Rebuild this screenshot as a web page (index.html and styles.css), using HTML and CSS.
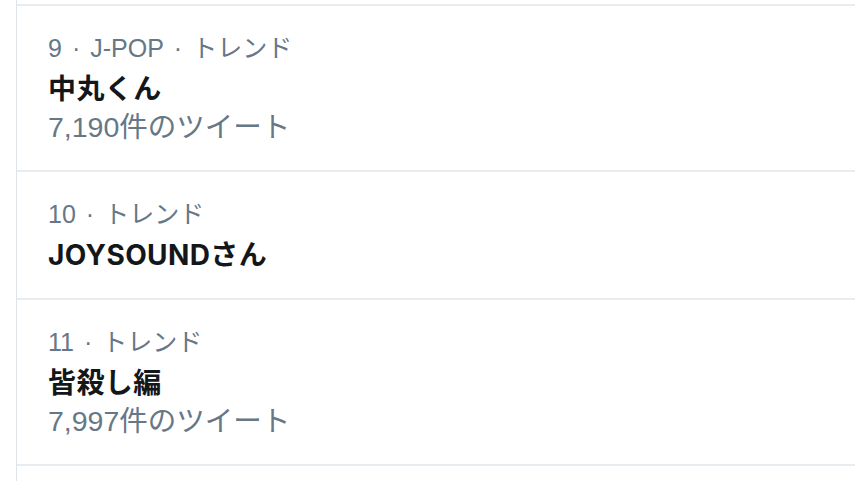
FILE: index.html
```html
<!DOCTYPE html>
<html lang="ja">
<head>
<meta charset="utf-8">
<link rel="stylesheet" href="styles.css">
</head>
<body>
<div class="page">
  <div class="column">
    <div class="trend">
      <div class="meta"><span>9</span><span class="sep">·</span><span>J-POP</span><span class="sep">·</span><span>トレンド</span></div>
      <div class="title">中丸くん</div>
      <div class="count">7,190件のツイート</div>
    </div>
    <div class="trend">
      <div class="meta"><span>10</span><span class="sep">·</span><span>トレンド</span></div>
      <div class="title">JOYSOUNDさん</div>
    </div>
    <div class="trend">
      <div class="meta"><span>11</span><span class="sep">·</span><span>トレンド</span></div>
      <div class="title">皆殺し編</div>
      <div class="count">7,997件のツイート</div>
    </div>
    <div class="trend trend-next"></div>
  </div>
</div>
</body>
</html>
```

FILE: styles.css
```css
html, body {
  margin: 0;
  padding: 0;
  background: #ffffff;
}

body {
  font-family: "Liberation Sans", "Noto Sans CJK JP", sans-serif;
  width: 855px;
  height: 481px;
  overflow: hidden;
}

.page {
  padding-left: 16px;
}

.column {
  border-left: 1px solid #dfe4e8;
  padding-top: 4px;
  height: 481px;
  box-sizing: border-box;
}

.trend {
  border-top: 2px solid #e6ecf0;
  padding: 26px 0 23px 31px;
}

.trend-next {
  padding: 0;
  height: 13px;
}

.meta {
  font-size: 25px;
  line-height: 32px;
  color: #667786;
  white-space: nowrap;
}

.sep {
  margin: 0 10px;
}

.title {
  font-family: "Inter", "Noto Sans CJK JP", sans-serif;
  font-size: 28px;
  line-height: 40px;
  margin-top: 5px;
  font-weight: 700;
  letter-spacing: 0.4px;
  color: #14171a;
  white-space: nowrap;
}

.count {
  font-size: 28.5px;
  line-height: 37px;
  margin-bottom: 1px;
  color: #667786;
  white-space: nowrap;
}
```
